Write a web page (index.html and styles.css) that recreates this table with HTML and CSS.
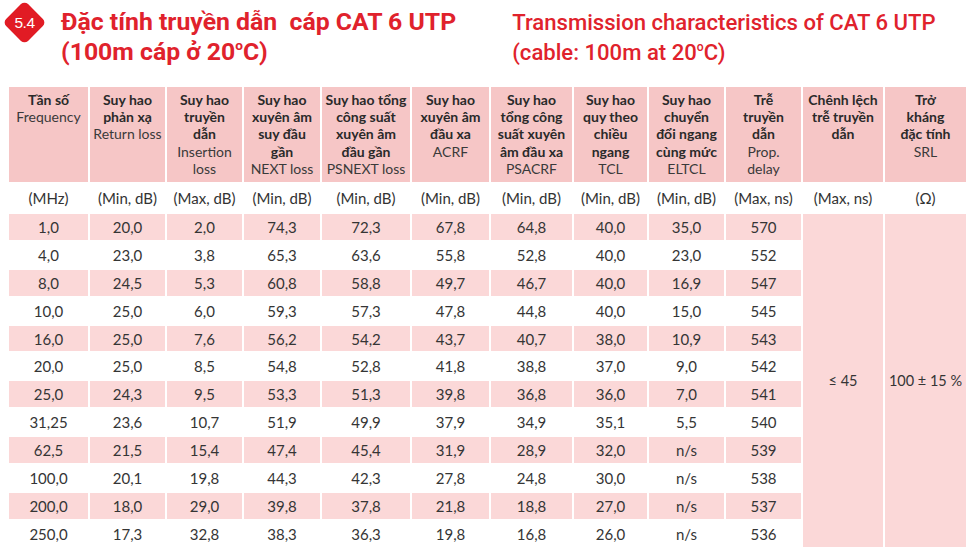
FILE: index.html
```html
<!DOCTYPE html>
<html lang="vi">
<head>
<meta charset="utf-8">
<link rel="stylesheet" href="styles.css">
</head>
<body>
<header class="top">
  <div class="badge"><span>5.4</span></div>
  <h1 class="title-vi">Đặc tính truyền dẫn&nbsp; cáp CAT 6 UTP<br>(100m cáp ở 20<sup>o</sup>C)</h1>
  <h2 class="title-en">Transmission characteristics of CAT 6 UTP<br>(cable: 100m at 20<sup>o</sup>C)</h2>
</header>
<table class="spec">
  <colgroup>
    <col class="c1"><col class="c2"><col class="c3"><col class="c4"><col class="c5"><col class="c6">
    <col class="c7"><col class="c8"><col class="c9"><col class="c10"><col class="c11"><col class="c12">
  </colgroup>
  <thead>
    <tr class="head">
      <th><b>Tần số</b><br>Frequency</th>
      <th><b>Suy hao<br>phản xạ</b><br>Return loss</th>
      <th><b>Suy hao<br>truyền<br>dẫn</b><br>Insertion<br>loss</th>
      <th><b>Suy hao<br>xuyên âm<br>suy đầu<br>gần</b><br>NEXT loss</th>
      <th><b>Suy hao tổng<br>công suất<br>xuyên âm<br>đầu gần</b><br>PSNEXT loss</th>
      <th><b>Suy hao<br>xuyên âm<br>đầu xa</b><br>ACRF</th>
      <th><b>Suy hao<br>tổng công<br>suất xuyên<br>âm đầu xa</b><br>PSACRF</th>
      <th><b>Suy hao<br>quy theo<br>chiều<br>ngang</b><br>TCL</th>
      <th><b>Suy hao<br>chuyển<br>đổi ngang<br>cùng mức</b><br>ELTCL</th>
      <th><b>Trễ<br>truyền<br>dẫn</b><br>Prop.<br>delay</th>
      <th><b>Chênh lệch<br>trễ truyền<br>dẫn</b></th>
      <th><b>Trở<br>kháng<br>đặc tính</b><br>SRL</th>
    </tr>
    <tr class="units">
      <td>(MHz)</td><td>(Min, dB)</td><td>(Max, dB)</td><td>(Min, dB)</td><td>(Min, dB)</td><td>(Min, dB)</td>
      <td>(Min, dB)</td><td>(Min, dB)</td><td>(Min, dB)</td><td>(Max, ns)</td><td>(Max, ns)</td><td>(Ω)</td>
    </tr>
  </thead>
  <tbody>
    <tr class="pink"><td>1,0</td><td>20,0</td><td>2,0</td><td>74,3</td><td>72,3</td><td>67,8</td><td>64,8</td><td>40,0</td><td>35,0</td><td>570</td>
      <td class="merged" rowspan="12">≤ 45</td><td class="merged" rowspan="12">100 ± 15 %</td></tr>
    <tr><td>4,0</td><td>23,0</td><td>3,8</td><td>65,3</td><td>63,6</td><td>55,8</td><td>52,8</td><td>40,0</td><td>23,0</td><td>552</td></tr>
    <tr class="pink"><td>8,0</td><td>24,5</td><td>5,3</td><td>60,8</td><td>58,8</td><td>49,7</td><td>46,7</td><td>40,0</td><td>16,9</td><td>547</td></tr>
    <tr><td>10,0</td><td>25,0</td><td>6,0</td><td>59,3</td><td>57,3</td><td>47,8</td><td>44,8</td><td>40,0</td><td>15,0</td><td>545</td></tr>
    <tr class="pink"><td>16,0</td><td>25,0</td><td>7,6</td><td>56,2</td><td>54,2</td><td>43,7</td><td>40,7</td><td>38,0</td><td>10,9</td><td>543</td></tr>
    <tr><td>20,0</td><td>25,0</td><td>8,5</td><td>54,8</td><td>52,8</td><td>41,8</td><td>38,8</td><td>37,0</td><td>9,0</td><td>542</td></tr>
    <tr class="pink"><td>25,0</td><td>24,3</td><td>9,5</td><td>53,3</td><td>51,3</td><td>39,8</td><td>36,8</td><td>36,0</td><td>7,0</td><td>541</td></tr>
    <tr><td>31,25</td><td>23,6</td><td>10,7</td><td>51,9</td><td>49,9</td><td>37,9</td><td>34,9</td><td>35,1</td><td>5,5</td><td>540</td></tr>
    <tr class="pink"><td>62,5</td><td>21,5</td><td>15,4</td><td>47,4</td><td>45,4</td><td>31,9</td><td>28,9</td><td>32,0</td><td>n/s</td><td>539</td></tr>
    <tr><td>100,0</td><td>20,1</td><td>19,8</td><td>44,3</td><td>42,3</td><td>27,8</td><td>24,8</td><td>30,0</td><td>n/s</td><td>538</td></tr>
    <tr class="pink"><td>200,0</td><td>18,0</td><td>29,0</td><td>39,8</td><td>37,8</td><td>21,8</td><td>18,8</td><td>27,0</td><td>n/s</td><td>537</td></tr>
    <tr><td>250,0</td><td>17,3</td><td>32,8</td><td>38,3</td><td>36,3</td><td>19,8</td><td>16,8</td><td>26,0</td><td>n/s</td><td>536</td></tr>
  </tbody>
</table>
</body>
</html>
```

FILE: styles.css
```css
html, body {
  margin: 0;
  padding: 0;
  background: #ffffff;
}

body {
  width: 973px;
  height: 553px;
  overflow: hidden;
  font-family: "Lato", "Open Sans", sans-serif;
  color: #333333;
}

.top {
  display: flex;
  align-items: flex-start;
  height: 85px;
  padding: 0 0 0 3px;
}

.badge {
  position: relative;
  width: 43px;
  height: 43px;
  margin-top: 1px;
  flex: none;
}

.badge::before {
  content: "";
  position: absolute;
  left: 6px;
  top: 6px;
  width: 31px;
  height: 31px;
  background: #e11b24;
  border-radius: 5px;
  transform: rotate(45deg);
}

.badge span {
  position: relative;
  display: block;
  text-align: center;
  line-height: 43px;
  color: #ffffff;
  font-family: "Liberation Sans", Arial, sans-serif;
  font-size: 15.5px;
  letter-spacing: -0.5px;
}

.title-vi,
.title-en {
  margin: 0;
  color: #e0222c;
  font-family: "Roboto", "DejaVu Sans", sans-serif;
  line-height: 30px;
  white-space: nowrap;
}

.title-vi {
  margin-left: 15px;
  margin-top: 7px;
  font-size: 24.8px;
  font-weight: 700;
  letter-spacing: 0;
}

.title-en {
  margin-left: 56px;
  margin-top: 7px;
  font-size: 22.1px;
  font-weight: 500;
  letter-spacing: 0;
}

sup {
  font-size: 0.55em;
  vertical-align: 0.75em;
  line-height: 0;
}

.spec {
  margin-left: 7px;
  margin-top: 0;
  border-collapse: collapse;
  table-layout: fixed;
  width: 959px;
}

.c1 { width: 81px; }
.c2 { width: 77px; }
.c3 { width: 77px; }
.c4 { width: 78px; }
.c5 { width: 90px; }
.c6 { width: 79px; }
.c7 { width: 83px; }
.c8 { width: 75px; }
.c9 { width: 77px; }
.c10 { width: 77px; }
.c11 { width: 82px; }
.c12 { width: 83px; }

.spec th,
.spec td {
  border: 2px solid #ffffff;
  text-align: center;
  padding: 0;
  white-space: nowrap;
}

.head th {
  height: 91px;
  vertical-align: top;
  padding-top: 4px;
  background: #f6c6c6;
  font-size: 14px;
  line-height: 17.2px;
  font-weight: 400;
  color: #3a3a3a;
}

.head th b {
  font-weight: 700;
  color: #2a2a2a;
}

.units td {
  height: 28px;
  font-size: 15px;
  color: #333333;
}

tbody td {
  height: 25.9px;
  font-size: 15px;
  color: #353535;
}

tbody tr.pink td {
  background: #fbd8d8;
}

tbody td.merged {
  background: #fbd8d8;
  vertical-align: middle;
  font-size: 14.5px;
}
```
